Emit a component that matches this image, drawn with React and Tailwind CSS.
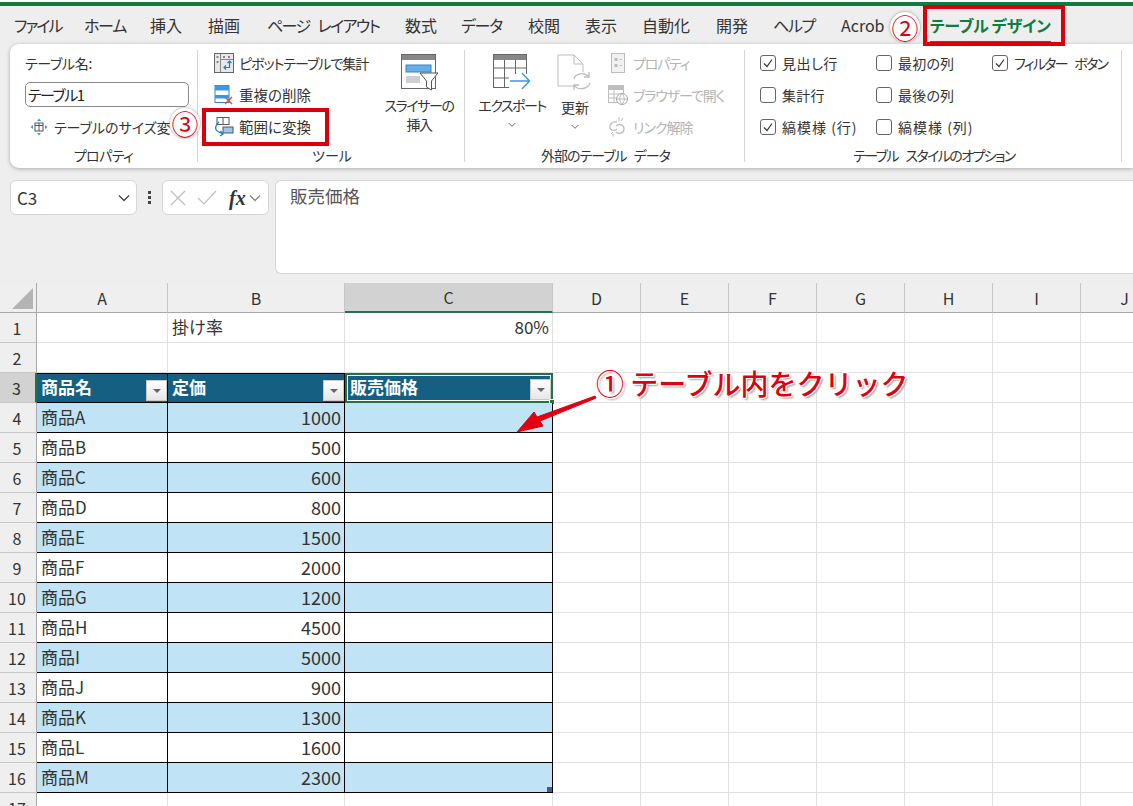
import React from "react";

const family = "font-['Noto_Sans_CJK_JP','Liberation_Sans',sans-serif]";
const font = `${family} [font-feature-settings:'palt']`;

const tabs = [
  ["ファイル", "w-[70px] pl-[14px] tracking-[-2px]"],
  ["ホーム", "w-[66px] pl-[14px] tracking-[-1.3px]"],
  ["挿入", "w-[58px] pl-[14px]"],
  ["描画", "w-[59px] pl-[14px]"],
  ["ページ レイアウト", "w-[138px] pl-[14px] tracking-[-1.6px] [word-spacing:6px]"],
  ["数式", "w-[56px] pl-[14px]"],
  ["データ", "w-[67px] pl-[14px] tracking-[-1.3px]"],
  ["校閲", "w-[57px] pl-[14px]"],
  ["表示", "w-[57px] pl-[14px]"],
  ["自動化", "w-[74px] pl-[14px]"],
  ["開発", "w-[57px] pl-[14px]"],
  ["ヘルプ", "w-[68px] pl-[14px] tracking-[-1.3px]"],
  ["Acrob", "w-[103px] pl-[14px]"],
];

const products = [
  ["商品A", 1000],
  ["商品B", 500],
  ["商品C", 600],
  ["商品D", 800],
  ["商品E", 1500],
  ["商品F", 2000],
  ["商品G", 1200],
  ["商品H", 4500],
  ["商品I", 5000],
  ["商品J", 900],
  ["商品K", 1300],
  ["商品L", 1600],
  ["商品M", 2300],
];

const letters = ["A", "B", "C", "D", "E", "F", "G", "H", "I", "J"];
const rowClass = "grid grid-cols-[37px_131px_177px_208px_88px_88px_88px_88px_88px_88px_88px] h-[30px]";
const gridCell = "border-r border-b border-[#e0e0e0] bg-white";

function Chevron({ className = "", color = "#444", size = 12 }) {
  return (
    <svg className={className} width={size} height={(size * 2) / 3} viewBox="0 0 12 8" fill="none">
      <path d="M1 1.5 L6 6.5 L11 1.5" stroke={color} strokeWidth="1.3" />
    </svg>
  );
}

function Check({ on, label, textClass = "" }) {
  return (
    <div className="flex items-center h-[32px] text-[14px] text-[#333]">
      <div className="w-[16px] h-[16px] rounded-[3px] border border-[#666] bg-white flex items-center justify-center">
        {on && (
          <svg width="12" height="12" viewBox="0 0 12 12" fill="none">
            <path d="M2 6.5 L5 9.5 L10 2.5" stroke="#333" strokeWidth="1.2" />
          </svg>
        )}
      </div>
      <span className={`ml-[6px] whitespace-nowrap ${textClass}`}>{label}</span>
    </div>
  );
}

function ResizeIcon() {
  return (
    <svg width="18" height="18" viewBox="0 0 18 18" fill="none">
      <rect x="5" y="5" width="8" height="8" fill="#fff" stroke="#555" />
      <path d="M5 7.5H13M9 5V13" stroke="#555" />
      <path d="M9 0.5L11 3H7ZM9 17.5L7 15H11ZM0.5 9L3 7V11ZM17.5 9L15 11V7Z" fill="#3f97dd" />
    </svg>
  );
}

function PivotIcon() {
  return (
    <svg width="20" height="20" viewBox="0 0 20 20" fill="none">
      <rect x="0.5" y="0.5" width="19" height="19" fill="#e8e8e8" stroke="#666" />
      <path d="M6.5 1V19M7 6.5H19" stroke="#888" />
      <rect x="2.5" y="3" width="2" height="2" fill="#888" />
      <rect x="2.5" y="8" width="2" height="2" fill="#888" />
      <rect x="9" y="3" width="2" height="2" fill="#888" />
      <rect x="14" y="3" width="2" height="2" fill="#888" />
      <path d="M15.5 8V14.5H10M12 12.5L10 14.5L12 16.5M13.5 10L15.5 8L17.5 10" stroke="#1f7ec8" strokeWidth="1.2" />
    </svg>
  );
}

function DedupeIcon() {
  return (
    <svg width="20" height="20" viewBox="0 0 20 20" fill="none">
      <rect x="1" y="0.5" width="14" height="17" fill="#fff" stroke="#2f86cc" />
      <rect x="1" y="0.5" width="14" height="5" fill="#3f97dd" />
      <rect x="1" y="10" width="14" height="3.5" fill="#3f97dd" />
      <path d="M11 12L18 19M18 12L11 19" stroke="#e0483c" strokeWidth="1.4" />
    </svg>
  );
}

function ConvertIcon() {
  return (
    <svg width="20" height="20" viewBox="0 0 20 20" fill="none">
      <rect x="3" y="0.5" width="12" height="7" fill="#fff" stroke="#555" />
      <path d="M9 1V7" stroke="#555" />
      <rect x="9" y="10" width="10" height="6" fill="#9cc7ea" stroke="#555" />
      <path d="M5 5C1 8 0 13 5 15L9 17M6 19L9 17L6.5 14" stroke="#1f7ec8" strokeWidth="1.3" />
    </svg>
  );
}

function SlicerIcon() {
  return (
    <svg className="ml-[2px]" width="38" height="38" viewBox="0 0 38 38" fill="none">
      <rect x="0.5" y="0.5" width="34" height="34" fill="#fff" stroke="#666" />
      <rect x="1" y="1" width="33" height="5" fill="#888" />
      <rect x="5" y="11" width="25" height="7" fill="#6aaee6" stroke="#2f86cc" />
      <rect x="5" y="22" width="14" height="7" fill="#cfcfcf" />
      <path d="M19 19H37L30.5 27V36L25.5 33V27Z" fill="#fff" stroke="#555" />
    </svg>
  );
}

function ExportIcon() {
  return (
    <svg width="38" height="38" viewBox="0 0 38 38" fill="none">
      <rect x="0.5" y="0.5" width="33" height="33" fill="#fff" stroke="#666" />
      <rect x="1" y="1" width="32" height="5" fill="#888" />
      <path d="M1 14H33M1 24H33M11.5 6V33M22.5 6V33" stroke="#666" />
      <rect x="16" y="20" width="22" height="14" fill="#fff" />
      <path d="M17 27H36M29 19L36.5 27L29 35" stroke="#3f97dd" strokeWidth="1.5" />
    </svg>
  );
}

function RefreshIcon() {
  return (
    <svg width="36" height="38" viewBox="0 0 36 38" fill="none">
      <path d="M1 1H17L26 10V32H1Z" fill="#fff" stroke="#bdbdbd" />
      <path d="M17 1V10H26" stroke="#bdbdbd" />
      <circle cx="25" cy="27" r="9" fill="#fff" />
      <path d="M17 25C18 20 27 17 32 23M33 29C31 35 21 37 17 31M32 18V23H27M17 36V31H22" stroke="#bdbdbd" strokeWidth="1.3" />
    </svg>
  );
}

function PropertyIcon() {
  return (
    <svg width="18" height="20" viewBox="0 0 18 20" fill="none">
      <rect x="2.5" y="0.5" width="13" height="19" fill="#f2f2f2" stroke="#bdbdbd" />
      <rect x="5.5" y="5" width="3" height="3" fill="#bdbdbd" />
      <rect x="5.5" y="11" width="3" height="3" fill="#bdbdbd" />
      <path d="M10.5 6.5H13M10.5 12.5H13" stroke="#bdbdbd" />
    </svg>
  );
}

function BrowserIcon() {
  return (
    <svg width="20" height="20" viewBox="0 0 20 20" fill="none">
      <rect x="0.5" y="0.5" width="15" height="17" fill="#fff" stroke="#bdbdbd" />
      <rect x="1" y="1" width="14" height="4" fill="#bdbdbd" />
      <path d="M6 5V17M1 9H15M1 13H15" stroke="#bdbdbd" />
      <circle cx="14" cy="14" r="5.5" fill="#fff" stroke="#a8a8a8" />
      <path d="M8.5 14H19.5M14 8.5C11 12 11 16 14 19.5C17 16 17 12 14 8.5" stroke="#a8a8a8" strokeWidth="0.8" />
    </svg>
  );
}

function UnlinkIcon() {
  return (
    <svg width="20" height="20" viewBox="0 0 20 20" fill="none">
      <path d="M9 5C4 4 1 8 2 11C3 14 7 14 9 12M8 9C11 6 16 8 16 12C16 16 11 18 8 15" stroke="#bdbdbd" strokeWidth="1.4" />
      <path d="M11 0V4M15 1L13 4M3 17L5 15M5 19.5V17" stroke="#bdbdbd" />
    </svg>
  );
}

function SmallCommand({ icon, label, disabled, textClass = "" }) {
  return (
    <div className={`flex items-center h-[32px] text-[14px] whitespace-nowrap ${disabled ? "text-[#b5b5b5]" : "text-[#333]"}`}>
      <div className="w-[20px] h-[20px] flex items-center justify-center">{icon}</div>
      <span className={`ml-[5px] ${textClass}`}>{label}</span>
    </div>
  );
}

function RibbonGroup({ className, label, labelClass = "", children }) {
  return (
    <div className={`relative flex flex-col h-[112px] my-[6px] border-r border-[#d5d5d5] ${className}`}>
      <div className="flex h-[96px] mt-[-3px] shrink-0">{children}</div>
      <div className={`text-center text-[14px] leading-[20px] text-[#333] mt-[2px] ${labelClass}`}>{label}</div>
    </div>
  );
}

function Ribbon() {
  return (
    <div className="flex h-[124px] ml-[10px] bg-white rounded-l-[9px] shadow-[0_1px_4px_rgba(0,0,0,0.28)]">
      <RibbonGroup className="w-[188px]" label="プロパティ" labelClass="tracking-[-0.6px]">
        <div className="pl-[15px] w-full overflow-hidden">
          <div className="h-[32px] leading-[32px] text-[14px] text-[#333] tracking-[-0.3px]">テーブル名:</div>
          <div className="h-[25px] mt-[3px] w-[164px] rounded-[5px] border border-[#8a8a8a] pl-[2px] text-[15px] leading-[23px] text-[#222] tracking-[-1.5px]">テーブル1</div>
          <div className="flex items-center h-[32px] mt-[4px] ml-[5px] text-[14px] text-[#333] whitespace-nowrap">
            <ResizeIcon />
            <span className="ml-[6px] w-[116px] overflow-hidden">テーブルのサイズ変更</span>
          </div>
        </div>
      </RibbonGroup>
      <RibbonGroup className="w-[267px]" label="ツール" labelClass="pl-[2px]">
        <div className="flex flex-col pl-[16px] w-[183px]">
          <SmallCommand icon={<PivotIcon />} label="ピボットテーブルで集計" textClass="tracking-[-1px]" />
          <SmallCommand icon={<DedupeIcon />} label="重複の削除" textClass="text-[14.5px]" />
          <SmallCommand icon={<ConvertIcon />} label="範囲に変換" textClass="text-[14.5px]" />
        </div>
        <div className="flex flex-col items-center w-[76px] pt-[7px] text-[14px] leading-[19px] text-[#333]">
          <SlicerIcon />
          <div className="mt-[4px] text-center whitespace-nowrap tracking-[-1.4px]">スライサーの<br />挿入</div>
        </div>
      </RibbonGroup>
      <RibbonGroup className="w-[280px]" label="外部のテーブル データ" labelClass="tracking-[-1px] [word-spacing:5px] pl-[2px]">
        <div className="flex flex-col items-center w-[86px] ml-[4px] pt-[7px] text-[14px] leading-[19px] text-[#333]">
          <ExportIcon />
          <div className="mt-[4px] whitespace-nowrap tracking-[-1.5px]">エクスポート</div>
          <Chevron className="mt-[7px]" color="#555" size={8} />
        </div>
        <div className="flex flex-col items-center w-[40px] pt-[7px] text-[14px] leading-[19px] text-[#333]">
          <RefreshIcon />
          <div className="mt-[6px] whitespace-nowrap">更新</div>
          <Chevron className="mt-[7px]" color="#555" size={8} />
        </div>
        <div className="flex flex-col ml-[13px]">
          <SmallCommand disabled icon={<PropertyIcon />} label="プロパティ" textClass="tracking-[-1.2px]" />
          <SmallCommand disabled icon={<BrowserIcon />} label="ブラウザーで開く" textClass="tracking-[-1.1px]" />
          <SmallCommand disabled icon={<UnlinkIcon />} label="リンク解除" textClass="tracking-[-1px]" />
        </div>
      </RibbonGroup>
      <RibbonGroup className="w-[377px]" label="テーブル スタイルのオプション" labelClass="tracking-[-1.6px] [word-spacing:6px] pl-[2px]">
        <div className="flex pl-[15px]">
          <div className="w-[116px]">
            <Check on label="見出し行" textClass="tracking-[0.5px]" />
            <Check label="集計行" textClass="tracking-[0.3px]" />
            <Check on label="縞模様 (行)" textClass="tracking-[1px]" />
          </div>
          <div className="w-[117px]">
            <Check label="最初の列" textClass="tracking-[0.2px]" />
            <Check label="最後の列" textClass="tracking-[0.2px]" />
            <Check label="縞模様 (列)" textClass="tracking-[1px]" />
          </div>
          <div className="ml-[-1px]">
            <Check on label="フィルター ボタン" textClass="ml-[5px] tracking-[-1.7px] [word-spacing:6px]" />
          </div>
        </div>
      </RibbonGroup>
    </div>
  );
}

function FormulaBar() {
  return (
    <div className="flex h-[104px] mt-[12px] ml-[10px]">
      <div className="flex items-center justify-between w-[127px] h-[35px] pl-[6px] pr-[6px] bg-white rounded-[6px] border border-[#d5d5d5] text-[17px] text-[#333]">
        <span>C3</span>
        <Chevron />
      </div>
      <div className="flex flex-col items-center justify-center gap-[2px] w-[25px] h-[35px]">
        <i className="block w-[3px] h-[3px] bg-[#444]" />
        <i className="block w-[3px] h-[3px] bg-[#444]" />
        <i className="block w-[3px] h-[3px] bg-[#444]" />
      </div>
      <div className="flex items-center w-[107px] h-[35px] bg-white rounded-[6px] border border-[#d5d5d5]">
        <svg className="ml-[7px]" width="16" height="16" viewBox="0 0 16 16" fill="none">
          <path d="M1 1L15 15M15 1L1 15" stroke="#bdbdbd" strokeWidth="1.2" />
        </svg>
        <svg className="ml-[11px]" width="20" height="16" viewBox="0 0 20 16" fill="none">
          <path d="M1 8L7 14L19 1" stroke="#bdbdbd" strokeWidth="1.2" />
        </svg>
        <span className="ml-[12px] font-['Liberation_Serif',serif] italic font-bold text-[20px] leading-none text-[#333]">fx</span>
        <Chevron className="ml-[3px]" color="#888" />
      </div>
      <div className={`${family} [font-feature-settings:normal] flex-1 h-[94px] ml-[6px] pl-[14px] bg-white rounded-l-[6px] border border-r-0 border-[#d5d5d5] text-[17.5px] leading-[30px] text-[#555]`}>
        販売価格
      </div>
    </div>
  );
}

function FilterButton() {
  return (
    <div className="absolute right-0 bottom-[1px] flex items-center justify-center w-[21px] h-[21px] border border-[#c8c8c8] bg-gradient-to-b from-white to-[#e6e6e6]">
      <div className="w-0 h-0 border-x-[4px] border-x-transparent border-t-[4px] border-t-[#666]" />
    </div>
  );
}

function HeaderRow() {
  return (
    <div className={`${rowClass} bg-[#efefef]`}>
      <div className="flex items-end justify-end pr-[3px] pb-[3px] border-r border-b border-[#a8a8a8]">
        <div className="w-0 h-0 border-l-[21px] border-l-transparent border-b-[21px] border-b-[#b4b4b4]" />
      </div>
      {letters.map((l) => (
        <div
          key={l}
          className={`flex items-center justify-center text-[16px] text-[#333] border-r border-[#c6c6c6] ${l === "C" ? "bg-[#d2d2d2] border-b-2 border-b-[#217346]" : "border-b border-b-[#a8a8a8]"}`}
        >
          {l}
        </div>
      ))}
    </div>
  );
}

function RowHead({ n, selected }) {
  return (
    <div
      className={`flex items-center justify-center pr-[2px] text-[16px] text-[#333] border-b border-[#c6c6c6] border-r ${selected ? "bg-[#d2d2d2] border-r-2 border-r-[#217346]" : "bg-[#efefef] border-r-[#a8a8a8]"}`}
    >
      {n}
    </div>
  );
}

function EmptyCells({ count = 7 }) {
  return Array.from({ length: count }, (_, i) => <div key={i} className={gridCell} />);
}

function Sheet() {
  return (
    <div className={`${family} [font-feature-settings:normal] overflow-hidden`}>
      <HeaderRow />
      <div className={rowClass}>
        <RowHead n={1} />
        <div className={gridCell} />
        <div className={`${gridCell} pl-[4px] text-[17px] leading-[28px] text-[#333]`}>掛け率</div>
        <div className={`${gridCell} pr-[3px] text-right text-[17px] leading-[28px] text-[#333]`}>80%</div>
        <EmptyCells />
      </div>
      <div className={rowClass}>
        <RowHead n={2} />
        <EmptyCells count={10} />
      </div>
      <div className={rowClass}>
        <RowHead n={3} selected />
        <div className="relative pl-[4px] bg-[#156082] border-r border-y border-black text-white font-bold text-[17px] leading-[26px]">
          商品名
          <FilterButton />
        </div>
        <div className="relative pl-[4px] bg-[#156082] border-r border-y border-black text-white font-bold text-[17px] leading-[26px]">
          定価
          <FilterButton />
        </div>
        <div className="relative pl-[3px] bg-[#156082] border-2 border-[#217346] shadow-[inset_0_0_0_1px_#fff] text-white font-bold text-[17px] leading-[24px]">
          販売価格
          <FilterButton />
          <div className="absolute right-[-4px] bottom-[-4px] w-[6px] h-[6px] bg-[#217346] border border-white" />
        </div>
        <EmptyCells />
      </div>
      {products.map(([name, price], i) => {
        const bg = i % 2 === 0 ? "bg-[#c0e4f5]" : "bg-white";
        return (
          <div className={rowClass} key={name}>
            <RowHead n={i + 4} />
            <div className={`${bg} pl-[4px] border-r border-b border-black text-[17px] leading-[28px] text-[#333]`}>{name}</div>
            <div className={`${bg} pr-[3px] text-right border-r border-b border-black text-[18px] leading-[28px] text-[#333]`}>{price}</div>
            <div className={`relative ${bg} border-r border-b border-black`}>
              {i === products.length - 1 && <div className="absolute right-0 bottom-0 w-[5px] h-[5px] bg-[#3d5ba9]" />}
            </div>
            <EmptyCells />
          </div>
        );
      })}
      <div className={rowClass}>
        <RowHead n={17} />
        <EmptyCells count={10} />
      </div>
    </div>
  );
}

function Badge({ className, children }) {
  return (
    <div className={`absolute flex items-center justify-center w-[30px] h-[30px] rounded-full bg-white shadow-[0_0_3px_rgba(0,0,0,0.4)] text-[27px] leading-none text-[#e00012] ${className}`}>
      {children}
    </div>
  );
}

export default function App() {
  return (
    <div className={`${font} relative w-[1133px] h-[806px] overflow-hidden bg-[#eeeeee]`}>
      <div className="h-[6px] border-t-2 border-white bg-[#107c41]" />
      <div className="flex items-center h-[38px] text-[16px] text-[#333] whitespace-nowrap">
        {tabs.map(([label, cls]) => (
          <div key={label} className={`shrink-0 ${cls}`}>{label}</div>
        ))}
        <div className="relative font-bold text-[#107c41] tracking-[-0.3px]">
          テーブル デザイン
          <div className="absolute left-0 right-0 bottom-[-7px] h-[3px] bg-[#107c41]" />
        </div>
      </div>
      <Ribbon />
      <FormulaBar />
      <div className="mt-[-1px]">
        <Sheet />
      </div>

      {/* annotations on top of the screenshot */}
      <div className="absolute left-[923px] top-[5px] w-[142px] h-[41px] border-[4px] border-[#d9000b]" />
      <div className="absolute left-[202px] top-[108px] w-[127px] h-[38px] border-[4px] border-[#d9000b]" />
      <Badge className="left-[890px] top-[12px]">②</Badge>
      <Badge className="left-[170px] top-[108px]">③</Badge>
      <svg className="absolute left-[510px] top-[390px]" width="92" height="50" viewBox="0 0 92 50">
        <path d="M86 8 L30 31 L33 36 L7 42 L24 22 L27 27 L85 6Z" fill="#e00012" stroke="#e00012" strokeWidth="1" />
      </svg>
      <div className="absolute left-[596px] top-[362px] whitespace-nowrap text-[28px] leading-[42px] font-medium text-[#e00012] [font-feature-settings:normal] [text-shadow:1px_1px_0_#fff,-1px_-1px_0_#fff,1px_-1px_0_#fff,-1px_1px_0_#fff,2px_2px_2px_#999]">
        ① テーブル内をクリック
      </div>
    </div>
  );
}
